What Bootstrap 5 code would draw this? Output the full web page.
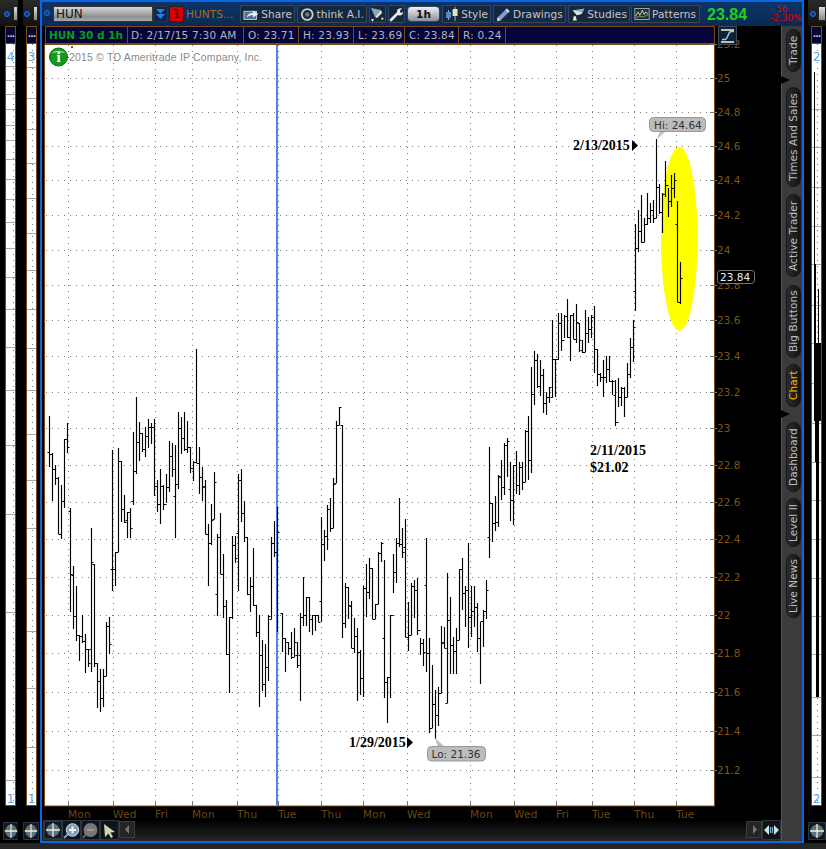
<!DOCTYPE html>
<html>
<head>
    <meta charset="UTF-8">
    <title>HUN chart</title>
    <link href="https://cdn.jsdelivr.net/npm/bootstrap@5.3.3/dist/css/bootstrap.min.css" rel="stylesheet">
    <style>
        html, body {
            margin: 0;
            width: 826px;
            height: 849px;
            overflow: hidden;
            background: #141414;
        }

        body, svg text {
            font-family: "DejaVu Sans", sans-serif;
        }

        .app-row {
            height: 843px;
        }

        .foot-band {
            height: 6px;
            background: #262626;
        }

        /* side panes */
        .side-pane {
            width: 18px;
            flex: none;
            background: #000;
        }

        .pane-wide {
            width: 17px;
        }

        .pane-top {
            height: 26px;
            background: linear-gradient(#2a2a2a, #111);
            padding: 6px 0 0 4px;
            position: relative;
        }

        .pane-dot, .main-dot {
            display: block;
            width: 6px;
            height: 6px;
            margin-top: 5px;
            border-radius: 50%;
            background: #0b3f8a;
            border: 1px solid #1b78e0;
        }

        .pane-stub {
            position: absolute;
            left: 13px;
            top: 6px;
            width: 5px;
            height: 15px;
            background: linear-gradient(#ddd, #888);
            border: 1px solid #222;
        }

        .strip {
            width: 11px;
            height: 780px;
            margin-left: 5px;
            border: 1px solid #7a4a14;
            background: #fff;
        }

        .strip-head {
            height: 17px;
            background: #05053a;
            color: #ccc;
            font-size: 9px;
            font-weight: 700;
            line-height: 15px;
            text-align: center;
            letter-spacing: -1px;
            border-bottom: 1px solid #7a4a14;
        }

        .strip svg {
            display: block;
            overflow: visible;
        }

        .pane-cross {
            margin: 16px 0 0 3px;
        }

        .pane-wide .strip {
            margin-left: 3px;
        }

        .pane-wide .pane-cross {
            margin-left: 0;
        }

        .pane-wide .pane-top {
            padding-left: 1px;
        }

        .pane-wide .pane-stub {
            left: 10px;
        }

        .pane-right .strip {
            margin-left: 3px;
        }

        .pane-right .pane-cross {
            margin-left: 0;
        }

        .pane-right .pane-top {
            padding-left: 2px;
        }

        .pane-right .pane-stub {
            left: 10px;
            width: 8px;
        }

        .dither {
            width: 5px;
            flex: none;
            background-color: #000;
            background-image: radial-gradient(#555 0.6px, transparent 0.7px);
            background-size: 2px 2px;
        }

        .dither-thin {
            width: 4px;
        }

        /* main window */
        .main-win {
            width: 764px;
            flex: none;
            border: 2px solid #0a66e4;
            background: #000;
        }

        .top-bar {
            height: 24px;
            padding: 3px 0 3px 2px;
            background: linear-gradient(#0c3468, #0a2a52);
        }

        .sym-box {
            width: 100px;
            height: 16px;
            margin: 1px 0 0 3px;
            padding-left: 2px;
            background: linear-gradient(#d8d8d8, #8f8f8f 70%, #a8a8a8);
            border: 1px solid #333;
            color: #151515;
            font-size: 12px;
            line-height: 15px;
        }

        .sym-drop {
            width: 15px;
            height: 16px;
            margin-top: 1px;
            background: #10264a;
            border: 1px solid #333;
        }

        .sym-link {
            width: 15px;
            height: 16px;
            margin: 1px 0 0 1px;
            background: #d70000;
            border: 1px solid #222;
            color: #300;
            font-size: 12px;
            line-height: 14px;
            text-align: center;
        }

        .sym-name {
            width: 56px;
            padding: 1px 0 0 2px;
            color: #a86f10;
            font-size: 10.5px;
            line-height: 17px;
            letter-spacing: .1px;
            white-space: nowrap;
        }

        .tool-btn {
            height: 18px;
            margin-right: 2px;
            padding: 0 2px;
            gap: 2px;
            border: 1px solid #35465a;
            border-radius: 1px;
            background: #15283f;
            color: #c3c8ce;
            font-size: 10.5px;
            line-height: 16px;
            letter-spacing: .1px;
            white-space: nowrap;
        }

        .tool-btn:hover {
            color: #c3c8ce;
        }

        .w-share { width: 55px; }
        .w-think { width: 70px; }
        .w-icon { width: 17px; padding: 0; justify-content: center; }
        .w-style { width: 49px; }
        .w-draw { width: 73px; }
        .w-studies { width: 62px; margin-right: 1px; }
        .w-patterns { width: 69px; }

        .w-tf {
            width: 33px;
            margin-right: 2px;
            justify-content: center;
            background: linear-gradient(#f0f0f0, #8a9098);
            border-radius: 4px;
            color: #111;
            font-weight: 700;
            height: 16px;
            margin-top: 1px;
        }

        .last-price {
            width: 68px;
            padding-left: 5px;
            color: #1fd01f;
            font-family: "Liberation Sans", sans-serif;
            font-size: 16px;
            font-weight: 700;
            line-height: 20px;
        }

        .net-change {
            width: 32px;
            height: 18px;
            color: #e00000;
            font-size: 9px;
            line-height: 9px;
            white-space: nowrap;
        }

        .work {
            width: 739px;
            flex: none;
        }

        .info-row {
            height: 18px;
        }

        .info-strip {
            width: 670px;
            margin-left: 3px;
            background: #05053a;
            border: 1px solid #7a4a14;
            color: #b4b4bc;
            font-size: 10.5px;
            line-height: 16px;
            letter-spacing: .2px;
        }

        .info-cell {
            padding-left: 3px;
            border-right: 1px solid #7a4a14;
            white-space: nowrap;
        }

        .c-sym { width: 82px; color: #0c9a1c; font-weight: 700; letter-spacing: 0; }
        .c-date { width: 116px; }
        .c-o { width: 55px; padding-left: 4px; }
        .c-h { width: 55px; padding-left: 4px; }
        .c-l { width: 51px; padding-left: 4px; }
        .c-c { width: 54px; padding-left: 4px; }
        .c-r { width: 47px; padding-left: 4px; }

        .curve-btn {
            width: 19px;
            height: 19px;
            margin-left: 3px;
            background: #13202e;
            border: 1px solid #3c4a58;
            position: relative;
            z-index: 2;
        }

        .chart-svg {
            display: block;
            overflow: visible;
        }

        .chart-svg text {
            font-size: 10.5px;
        }

        .px-label { fill: #7e5416; }
        .day-label { fill: #6e4512; letter-spacing: .2px; }
        .note-label { font-family: "Liberation Serif", serif; font-weight: 700; fill: #000; }
        .chart-svg text.note-label { font-size: 14px; }
        .chart-svg text.copy-label { font-family: "Liberation Sans", sans-serif; fill: #8a8a8a; }
        .chart-svg text.call-label { fill: #333; }
        .chart-svg text.info-i { font-family: "Liberation Serif", serif; font-size: 15px; font-weight: 700; fill: #fff; }

        .bottom-bar {
            height: 21px;
            padding-left: 1px;
            background: linear-gradient(#000, #262626);
        }

        .bar-btn {
            width: 19px;
            height: 20px;
            flex: none;
            border: 1px solid #2c3642;
            background: #101418;
            padding: 0;
            border-radius: 0;
        }

        .scroll-btn {
            width: 16px;
            height: 17px;
            margin-top: 1px;
            flex: none;
            background: #252525;
            border: 1px solid #3c3c3c;
        }

        /* tabs column */
        .tab-col {
            width: 21px;
            flex: none;
            padding: 3px 1px 0 4px;
            background: #3b3b3b;
            border-left: 1px solid #555;
            position: relative;
        }

        .side-tab {
            width: 15px;
            padding: 0;
            border: 1px solid #161616;
            border-radius: 8px;
            background: linear-gradient(90deg, #141414, #2c2c2c);
            color: #bdbdbd;
            font-size: 10.5px;
            line-height: 13px;
            letter-spacing: .1px;
            writing-mode: vertical-rl;
            transform: rotate(180deg);
            white-space: nowrap;
            text-align: center;
        }

        .side-tab:hover {
            color: #bdbdbd;
        }

        .side-tab.tab-on {
            color: #f3b500;
        }

        .t-trade { height: 43px; margin-bottom: 15px; }
        .t-sales { height: 100px; margin-bottom: 7px; }
        .t-active { height: 83px; margin-bottom: 8px; }
        .t-big { height: 73px; margin-bottom: 6px; }
        .t-chart { height: 43px; margin-bottom: 15px; }
        .t-dash { height: 70px; margin-bottom: 6px; }
        .t-level { height: 49px; margin-bottom: 7px; }
        .t-news { height: 64px; }

        .tab-notch {
            position: absolute;
            left: -1px;
            width: 0;
            height: 0;
            border-left: 9px solid #000;
            border-top: 4px solid transparent;
            border-bottom: 4px solid transparent;
        }

        .notch-a { top: 50px; }
        .notch-b { top: 384px; }
    </style>
</head>
<body>

<div class="d-flex app-row">

    <div class="side-pane">
        <div class="pane-top"><span class="pane-dot"></span><span class="pane-stub"></span></div>
        <div class="strip"><div class="strip-head">...</div><svg id="strip4" width="9" height="761"></svg></div>
        <div class="pane-cross"><svg width="16" height="18" viewBox="0 0 18 18" preserveAspectRatio="none" class="d-block"><use href="#ic-cross"/></svg></div>
    </div>
    <div class="dither"></div>
    <div class="side-pane pane-wide">
        <div class="pane-top"><span class="pane-dot"></span><span class="pane-stub"></span></div>
        <div class="strip"><div class="strip-head">...</div><svg id="strip3" width="9" height="761"></svg></div>
        <div class="pane-cross"><svg width="16" height="18" viewBox="0 0 18 18" preserveAspectRatio="none" class="d-block"><use href="#ic-cross"/></svg></div>
    </div>

    <div class="main-win d-flex flex-column">
        <div class="top-bar d-flex">
            <span class="main-dot"></span>
            <div class="sym-box">HUN</div>
            <div class="sym-drop">
                <svg width="13" height="14" class="d-block"><path d="M2 2h9L6.500 6.500zM2 7h9L6.500 12z" fill="#2f7fd8"/></svg>
            </div>
            <div class="sym-link">1</div>
            <div class="sym-name">HUNTS...</div>

            <button class="btn tool-btn d-flex align-items-center w-share">
                <svg width="17" height="14" viewBox="0 0 18 14"><rect x="1" y="4" width="14" height="9" fill="#4d7391" stroke="#c4d4e0"/><path d="M4 11c1-4 4-5 7-5V3l6 4-6 4V8c-3 0-5 1-7 3z" fill="#e8eef2"/></svg>Share</button>
            <button class="btn tool-btn d-flex align-items-center w-think">
                <svg width="15" height="15" viewBox="0 0 16 16"><circle cx="8" cy="8" r="6" fill="#1d2b38" stroke="#c6d2cc" stroke-width="2"/><circle cx="8" cy="8" r="2.500" fill="#5b7f96"/></svg>think A.I.</button>
            <button class="btn tool-btn d-flex align-items-center w-icon">
                <svg width="15" height="15" viewBox="0 0 15 15"><path d="M1 1l10 2-6 7z" fill="#8fa6b8"/><path d="M5 10l6-7 1 3-5 5z" fill="#dfe7ea"/><path d="M1 12l3 0-1.500 3zM12 10l2 2-3 1z" fill="#d5e2c8"/></svg></button>
            <button class="btn tool-btn d-flex align-items-center w-icon">
                <svg width="15" height="15" viewBox="0 0 15 15"><path d="M2 13l7-7" stroke="#e6ecef" stroke-width="2.600" stroke-linecap="round"/><path d="M8 3.500C9 1.500 11.500 1 13 1.500L10.800 3.800l.6 1.700 1.800.6L14 4c.6 2-.6 4.200-3 4.500-1 .1-2-.3-2.500-1z" fill="#e6ecef"/></svg></button>
            <button class="btn tool-btn d-flex align-items-center w-tf">1h</button>
            <button class="btn tool-btn d-flex align-items-center w-style">
                <svg width="16" height="16" viewBox="0 0 14 16"><path d="M3.500 4v10M10 1v14" stroke="#9fb6c4"/><rect x="1" y="6" width="5" height="6" fill="#4f8dc8"/><rect x="7.500" y="3" width="5" height="7" fill="#e6e3b8"/></svg>Style</button>
            <button class="btn tool-btn d-flex align-items-center w-draw">
                <svg width="15" height="15" viewBox="0 0 16 16"><path d="M11.500 1.500l3 3L5 14l-4 1 1-4z" fill="#7f9fd8"/><path d="M11.500 1.500l3 3-1.500 1.500-3-3z" fill="#cbd6e8"/><path d="M1 15l1-4 3 3z" fill="#e8dcc0"/></svg>Drawings</button>
            <button class="btn tool-btn d-flex align-items-center w-studies">
                <svg width="15" height="15" viewBox="0 0 17 16"><path d="M2 3l14-2-3 6-6 2z" fill="#93a9b8"/><path d="M2 3l5 6 6-2-1-2z" fill="#d9e2e6"/><path d="M3 10h3v2l1 3H2l1-3z" fill="#e6ecd8"/></svg>Studies</button>
            <button class="btn tool-btn d-flex align-items-center w-patterns">
                <svg width="16" height="14" viewBox="0 0 19 15"><rect x="1" y="1" width="17" height="13" fill="#20303e" stroke="#aeb9a4"/><path d="M2 10l3-5 2 4 3-6 2 5 2-3 3 3" fill="none" stroke="#e8e2b0"/><path d="M2 12l5-2 4 1 6-3" fill="none" stroke="#6fb96f"/></svg>Patterns</button>
            <div class="last-price">23.84</div>
            <div class="net-change">-.56<br>-2.30%</div>
        </div>

        <div class="d-flex flex-grow-1">
            <div class="work d-flex flex-column">
                <div class="info-row d-flex">
                    <div class="info-strip d-flex">
                        <div class="info-cell c-sym">HUN 30 d 1h</div>
                        <div class="info-cell c-date">D: 2/17/15 7:30 AM</div>
                        <div class="info-cell c-o">O: 23.71</div>
                        <div class="info-cell c-h">H: 23.93</div>
                        <div class="info-cell c-l">L: 23.69</div>
                        <div class="info-cell c-c">C: 23.84</div>
                        <div class="info-cell c-r">R: 0.24</div>
                    </div>
                    <div class="curve-btn">
                        <svg width="17" height="17" class="d-block"><path d="M2 3h13M2 15h13" stroke="#f2f2f2" stroke-width="1.300"/><path d="M3 12.500h3c3 0 3-8 6-8h3" fill="none" stroke="#8fd0f4" stroke-width="1.400"/></svg>
                    </div>
                </div>

                <svg class="chart-svg" width="739" height="776" viewBox="42 44 739 776">
                    <rect x="44.500" y="44.500" width="670" height="761.500" fill="#fff" stroke="#7a4a14"/>
                    <g id="grid" stroke="#7b7b7b" fill="none"></g>
                    <rect x="276" y="45" width="2" height="761" fill="#4f86e8"/>
                    <ellipse cx="679.300" cy="238.700" rx="18.300" ry="92" fill="#ff0"/>
                    <g id="bars" stroke="#000" stroke-width="1.150" fill="none"></g>

                    <circle cx="58.500" cy="57" r="9" fill="#129a1a" stroke="#0a6a10"/>
                    <path d="M52 53c2-3 11-3 13 0-3-1-10-1-13 0z" fill="#9fe29f"/>
                    <text x="58.500" y="62" text-anchor="middle" class="info-i">i</text>
                    <rect x="71" y="46" width="2" height="2" fill="#8a5a10"/>
                    <text x="69" y="60.500" textLength="193" class="copy-label">2015 © TD Ameritrade IP Company, Inc.</text>

                    <path d="M657 139l3-8h6z" fill="#bcbcbc"/>
                    <rect x="649.500" y="117.500" width="56" height="14" rx="4" fill="#bcbcbc" stroke="#999"/>
                    <text x="654" y="128.500" class="call-label">Hi: 24.64</text>
                    <path d="M435 738l3 9h7z" fill="#bcbcbc"/>
                    <rect x="427.500" y="746.500" width="58" height="14.500" rx="4" fill="#bcbcbc" stroke="#999"/>
                    <text x="431.500" y="758" class="call-label">Lo: 21.36</text>

                    <text x="573" y="150" class="note-label">2/13/2015</text>
                    <path d="M632 140l6 5.500-6 5.500z" fill="#000"/>
                    <text x="349" y="747" class="note-label">1/29/2015</text>
                    <path d="M407 737l6 5.500-6 5.500z" fill="#000"/>
                    <text x="590" y="455" class="note-label">2/11/2015</text>
                    <text x="590" y="472" class="note-label">$21.02</text>

                    <g id="axis"></g>
                    <rect x="717.500" y="270.500" width="37" height="13" rx="3" fill="#000" stroke="#777"/>
                    <text x="720" y="281" fill="#eee">23.84</text>
                </svg>

                <div class="bottom-bar d-flex">
                    <button class="btn bar-btn"><svg width="17" height="18" class="d-block"><use href="#ic-cross"/></svg></button>
                    <button class="btn bar-btn"><svg width="17" height="18" viewBox="0 0 17 18" class="d-block"><path d="M5 13l-4 4" stroke="#7d9fc0" stroke-width="2"/><circle cx="9.500" cy="9" r="6.300" fill="#7d9fc0" stroke="#c4d6e6"/><path d="M6 9h7M9.500 5.500v7" stroke="#f4f4d8" stroke-width="2"/></svg></button>
                    <button class="btn bar-btn"><svg width="17" height="18" viewBox="0 0 17 18" class="d-block"><path d="M4 13l-3 4" stroke="#666" stroke-width="2"/><circle cx="8.500" cy="9" r="7" fill="#777"/><path d="M5 9h7" stroke="#9a9a9a" stroke-width="2"/></svg></button>
                    <button class="btn bar-btn"><svg width="17" height="18" viewBox="0 0 17 18" class="d-block"><path d="M3 3l11 8-4.500.5 2.500 4.500-2 1-2.500-4.500L4 16z" fill="#c5d8b0"/></svg></button>
                    <div class="scroll-btn"><svg width="14" height="15" class="d-block"><path d="M9 3v9L5 7.500z" fill="#777"/></svg></div>
                    <div class="flex-grow-1"></div>
                    <div class="scroll-btn"><svg width="14" height="15" class="d-block"><path d="M6 3v9l4-4.500z" fill="#777"/></svg></div>
                    <button class="btn bar-btn"><svg width="17" height="18" viewBox="0 0 17 18" class="d-block"><path d="M1 9l5-5v10zM16 9l-5-5v10z" fill="#cfe4c8"/><path d="M7.500 6v6M9.500 6v6" stroke="#6ea8e8" stroke-width="1.300"/></svg></button>
                </div>
            </div>

            <div class="tab-col d-flex flex-column">
                <button class="btn side-tab t-trade">Trade</button>
                <button class="btn side-tab t-sales">Times And Sales</button>
                <button class="btn side-tab t-active">Active Trader</button>
                <button class="btn side-tab t-big">Big Buttons</button>
                <button class="btn side-tab tab-on t-chart">Chart</button>
                <button class="btn side-tab t-dash">Dashboard</button>
                <button class="btn side-tab t-level">Level II</button>
                <button class="btn side-tab t-news">Live News</button>
                <span class="tab-notch notch-a"></span>
                <span class="tab-notch notch-b"></span>
            </div>
        </div>
    </div>

    <div class="dither dither-thin"></div>
    <div class="side-pane pane-right">
        <div class="pane-top"><span class="pane-dot"></span><span class="pane-stub"></span></div>
        <div class="strip"><div class="strip-head">...</div><svg id="strip2" width="9" height="761"></svg></div>
        <div class="pane-cross"><svg width="18" height="18" class="d-block"><use href="#ic-cross"/></svg></div>
    </div>
</div>
<div class="foot-band"></div>

<svg width="0" height="0" class="position-absolute">
    <defs>
        <g id="ic-cross">
            <rect x="0.500" y="0.500" width="17" height="17" fill="#12171c" stroke="#2c3642"/>
            <circle cx="9" cy="9" r="6.500" fill="#587088"/>
            <path d="M9 2v14M2 9h14" stroke="#f0f0cc" stroke-width="1.300"/>
        </g>
    </defs>
</svg>

<script>
    const NS = 'http://www.w3.org/2000/svg';

    // price labels: text and page y
    const prices = [['25.2',44],['25',78],['24.8',112],['24.6',146],['24.4',180],['24.2',215],['24',250],['23.8',285],
        ['23.6',320],['23.4',356],['23.2',392],['23',428],['22.8',465],['22.6',502],['22.4',539],['22.2',577],
        ['22',615],['21.8',653],['21.6',692],['21.4',731],['21.2',770]];
    const days = [['Mon',68],['Wed',113],['Fri',155],['Mon',192],['Thu',237],['Tue',278],['Thu',321],['Mon',363],
        ['Wed',407],['Mon',470],['Wed',514],['Fri',556],['Tue',592],['Thu',634],['Tue',676]];

    // each bar is [high, low, open, close], read in 3x crops from y0
    const sections = [
        {x0: 49.3, x1: 278, y0: 380, bars: [
            [108,262,217,222],[218,362,222,268],[255,316,268,293],[290,462,293,462],[316,478,462,362],[178,385,362,178],
            [130,218,178,202],[385,695,393,582],[558,748,586,707],[618,782,707,765],[765,842,765,768],[705,790,768,782],
            [762,880,782,808],[808,862,808,850],[445,875,808,545],[552,862,552,850],[850,985,850,903],[868,995,903,955],
            [868,980,955,887],[725,888,887,738],[712,822,738,793],[210,634,568,568],[515,617,568,515],[205,515,515,243],
            [243,425,243,388],[345,430,388,425],[395,473,420,395],[385,473,395,445],[155,375,362,273],[52,283,273,186],
            [125,242,186,158],[158,215,158,208],[142,230,208,168],[118,205,168,142],[128,192,142,142],[118,347,142,317],
            [300,395,317,372],[268,432,372,317],[315,390,317,372],[283,368,372,322],[183,335,322,228],[190,290,228,268],
            [195,473,347,312],[97,328,312,145],[110,222,145,175],[97,212,175,207],[123,218,207,202],[202,278,202,263],
            [243,302,263,247],[-93,250,245,248],[202,342,248,290],[262,362,290,322],[300,463,318,463],[433,617,463,490],
            [373,495,490,420],[277,418,418,307],[463,707,643,470],[400,582,470,582],[522,715,582,677],[660,825,677,822],
            [710,938,822,712],[468,718,712,496],[468,548,496,535],[283,632,458,300],[268,425,300,400],[362,485,400,472],
            [472,645,472,642],[590,695,642,618],[505,678,618,674],[674,770,674,757],[705,980,757,826],[780,932,826,912],
            [792,950,912,862],[705,902,862,708],[472,718,716,490],[423,530,490,515],[380,757,515,457]
        ]},
        {x0: 282.3, x1: 498.3, y0: 400, bars: [
            [640,755,640,715],[715,815,715,727],[727,765,727,745],[697,778,745,770],[685,770,770,727],[727,805,765,795],
            [640,902,765,652],[532,678,650,645],[590,677,645,590],[590,697,590,658],[645,705,658,645],[645,692,645,645],
            [645,665,645,665],[352,665,602,432],[390,482,432,407],[315,450,407,328],[295,395,328,385],[235,385,385,253],
            [62,250,250,75],[20,75,75,20],[75,715,75,668],[550,685,668,562],[560,657,562,615],[602,745,617,745],
            [655,760,745,708],[685,902,708,755],[750,885,755,835],[558,890,835,565],[492,650,565,575],[475,597,575,505],
            [505,658,505,658],[612,658,658,612],[455,612,612,458],[425,487,458,430],[480,895,715,847],[830,970,847,830],
            [645,895,830,645],[462,578,645,515],[415,550,515,430],[295,440,430,432],[385,475,432,457],[358,710,440,710],
            [605,752,710,705],[550,705,705,558],[540,655,558,570],[533,705,570,690],[715,765,690,730],[718,798,730,755],
            [415,815,555,758],[715,1000,758,985],[795,985,985,913],[870,1018,913,945],[860,978,945,878],[678,878,878,730],
            [680,745,725,745],[520,908,908,660],[590,822,660,735],[712,822,735,752],[685,822,752,720],[508,720,720,508],
            [475,630,508,578],[558,682,578,570],[430,745,570,650],[558,710,650,632],[558,680,632,622],[608,755,622,715],
            [665,852,715,663],[630,742,663,632],[540,658,632,570],[140,475,412,308],[308,425,308,370],[288,392,370,365],
            [225,380,365,228]
        ]},
        {x0: 501.3, x1: 633.3, y0: 280, bars: [
            [540,660,590,622],[490,645,622,495],[475,590,495,483],[547,722,628,660],[555,735,660,555],[512,642,555,615],
            [545,645,615,560],[545,630,560,605],[450,605,605,452],[408,600,452,540],[262,578,540,342],[213,375,342,240],
            [222,325,240,318],[240,348,318,285],[268,398,285,370],[335,405,370,350],[322,370,350,322],[120,355,350,237],
            [237,352,237,237],[100,240,237,128],[98,212,128,180],[105,175,180,108],[58,175,108,172],[105,242,172,105],
            [100,178,105,178],[72,190,178,125],[130,215,130,180],[180,218,210,215],[90,215,215,160],[110,190,160,148],
            [105,175,148,110],[78,280,110,208],[208,318,208,283],[280,305,283,290],[240,350,290,290],[228,310,290,268],
            [228,305,268,302],[300,345,302,302],[300,438,345,425],[295,380,425,350],[322,378,350,325],[322,410,325,350],
            [250,350,350,283],[175,295,283,200],[120,245,200,142]
        ]},
        {x0: 635.3, x1: 680.3, y0: 100, bars: [
            [372,632,572,445],[330,455,445,393],[285,430,393,425],[355,425,425,372],[278,375,372,355],[310,370,355,330],
            [300,370,330,355],[118,355,355,262],[252,342,262,335],[280,398,335,282],[182,290,282,255],[265,352,255,303],
            [225,320,303,265],[220,295,265,240],[302,607,372,607],[487,613,607,535]
        ]}
    ];

    function addEl(parent, tag, attrs, txt) {
        const el = document.createElementNS(NS, tag);
        Object.keys(attrs).forEach(k => el.setAttribute(k, attrs[k]));
        if (txt) el.textContent = txt;
        parent.appendChild(el);
        return el;
    }

    const grid = document.getElementById('grid');
    let gridPath = '';
    prices.forEach(p => { if (p[1] > 50) gridPath += `M46 ${p[1] + .5}H714`; });
    days.forEach(d => { gridPath += `M${d[1] + .5} 45V806`; });
    addEl(grid, 'path', {d: gridPath, 'stroke-dasharray': '1 5'});

    const axis = document.getElementById('axis');
    prices.forEach(p => {
        addEl(axis, 'path', {d: `M710 ${p[1] + .5}H717`, stroke: '#777'});
        addEl(axis, 'text', {x: 717, y: p[1] + 3.5, class: 'px-label'}, p[0]);
    });
    days.forEach(d => {
        addEl(axis, 'path', {d: `M${d[1] + .5} 802V806`, stroke: '#777'});
        addEl(axis, 'text', {x: d[1], y: 818, class: 'day-label'}, d[0]);
    });

    let barPath = '';
    sections.forEach(s => {
        const step = (s.x1 - s.x0) / (s.bars.length - 1);
        s.bars.forEach((b, i) => {
            const x = Math.floor(s.x0 + i * step) + .5;
            const yy = b.map(v => Math.round(s.y0 + v / 3));
            barPath += `M${x} ${yy[0]}V${yy[1]}M${x - 2} ${yy[2] + .5}H${x}M${x} ${yy[3] + .5}H${x + 2}`;
        });
    });
    addEl(document.getElementById('bars'), 'path', {d: barPath});

    // small side strips, page y minus 45
    function drawStrip(id, dotX, lines, num, low, solid) {
        const svg = document.getElementById(id);
        let path = `M${dotX} 0V761`;
        addEl(svg, 'path', {d: path, stroke: '#777', 'stroke-dasharray': '1 5'});
        lines.forEach(y => addEl(svg, 'path', {d: `M0 ${y - 44.5}H9`, stroke: '#aaa'}));
        (solid || []).forEach(r => addEl(svg, 'rect', {x: r[0], y: r[1] - 45, width: r[2], height: r[3] - r[1], fill: '#000'}));
        addEl(svg, 'text', {x: 4.5, y: 17, 'text-anchor': 'middle', 'font-size': 12, fill: '#5aa4ee'}, num);
        addEl(svg, 'text', {x: 4.5, y: 759, 'text-anchor': 'middle', 'font-size': 12, fill: '#5aa4ee'}, low);
    }
    drawStrip('strip4', 7.5, [67,81,95,110,126,141,160,180,200,223,249,278,310,348,391,446,515,613,781], '4', '1');
    drawStrip('strip3', 5.5, [68,99,130,164,199,234,271,310,349,391,435,481,529,579,632,689,748], '3', '1');
    drawStrip('strip2', 5.5, [110,148,188,227,265,306,344,384,424,463,501,540,579,617,655,698,736,778], '2', '2', [
        [2,73,1,265],[2,265,2,344],[6,290,1,344],[2,344,7,422],[3,422,4,463],[4,463,3,698]
    ]);
</script>

<script src="https://cdn.jsdelivr.net/npm/bootstrap@5.3.3/dist/js/bootstrap.bundle.min.js"></script>
</body>
</html>
